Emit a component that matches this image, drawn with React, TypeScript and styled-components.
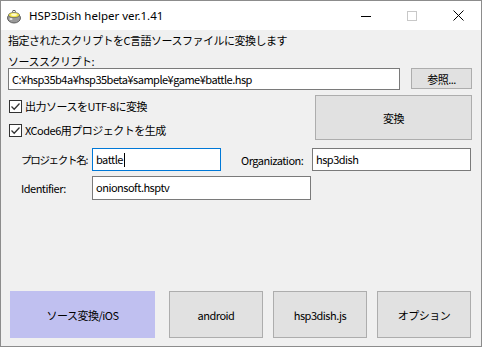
import { createGlobalStyle } from 'styled-components';
import styled from 'styled-components';

const GlobalStyle = createGlobalStyle`
	html, body {
		margin: 0;
		padding: 0;
		background: #ffffff;
	}
	* {
		box-sizing: border-box;
	}
`;

const UI_FONT = `"Noto Sans CJK JP", "Noto Sans", sans-serif`;

const Window = styled.div`
	width: 482px;
	height: 347px;
	border: 1px solid #8c8c8c;
	display: flex;
	flex-direction: column;
	background: #f0f0f0;
	font-family: ${UI_FONT};
	font-size: 11px;
	letter-spacing: -0.5px;
	color: #000;
`;

const TitleBar = styled.div`
	height: 29px;
	flex: none;
	background: #ffffff;
	display: flex;
	align-items: center;
	padding-left: 5px;
	letter-spacing: 0;
`;

const TitleText = styled.span`
	margin-left: 7px;
	font-family: "Noto Sans", sans-serif;
	font-size: 11.5px;
	color: #000;
	flex: 1;
`;

const Controls = styled.div`
	display: flex;
	height: 100%;
`;

const ControlBtn = styled.div`
	width: 46px;
	height: 100%;
	display: flex;
	align-items: center;
	justify-content: center;
`;

const Body = styled.div`
	flex: 1;
	display: flex;
	flex-direction: column;
	padding: 0 9px 8px 7px;
`;

const Caption = styled.div<{ $top: number }>`
	margin-top: ${(p) => p.$top}px;
	line-height: 14px;
	white-space: nowrap;
`;

const PathRow = styled.div`
	display: flex;
	align-items: flex-start;
	gap: 11px;
`;

const TextField = styled.div<{ $w: number; $h?: number; $focus?: boolean }>`
	width: ${(p) => p.$w}px;
	height: ${(p) => p.$h ?? 23}px;
	flex: none;
	background: #ffffff;
	border: 1px solid ${(p) => (p.$focus ? '#0078d7' : '#7a7a7a')};
	padding: 2px 0 0 3px;
	line-height: 16px;
	white-space: nowrap;
	overflow: hidden;
`;

const Caret = styled.span`
	display: inline-block;
	width: 1px;
	height: 14px;
	background: #000;
	vertical-align: -3px;
	margin-left: 1px;
`;

const Button = styled.div<{ $w: number; $h: number; $accent?: boolean }>`
	width: ${(p) => p.$w}px;
	height: ${(p) => p.$h}px;
	flex: none;
	background: ${(p) => (p.$accent ? '#c0c0f0' : '#e1e1e1')};
	border: 1px solid ${(p) => (p.$accent ? '#c0c0f0' : '#adadad')};
	display: flex;
	align-items: center;
	justify-content: center;
	white-space: nowrap;
`;

const Middle = styled.div`
	display: flex;
	justify-content: space-between;
	margin-top: 5px;
`;

const Checks = styled.div`
	display: flex;
	flex-direction: column;
	gap: 10px;
	padding-top: 4px;
`;

const CheckRow = styled.label`
	display: flex;
	align-items: center;
	height: 14px;
	gap: 3px;
	padding-left: 1px;
	white-space: nowrap;
`;

const Box = styled.span`
	width: 13px;
	height: 13px;
	border: 1px solid #333333;
	background: #ffffff;
	display: flex;
	align-items: center;
	justify-content: center;
`;

const Form = styled.div`
	display: flex;
	flex-direction: column;
	gap: 5px;
	margin-top: 8px;
	padding-left: 13px;
`;

const FormRow = styled.div`
	display: flex;
	align-items: center;
`;

const FieldLabel = styled.span<{ $w: number; $tight?: boolean }>`
	width: ${(p) => p.$w}px;
	flex: none;
	white-space: nowrap;
	font-size: ${(p) => (p.$tight ? '10.5px' : '11px')};
	letter-spacing: ${(p) => (p.$tight ? '-1.3px' : '-0.5px')};
`;

const BottomBar = styled.div`
	margin-top: auto;
	display: flex;
	align-items: flex-end;
	padding-left: 2px;
`;

const Spacer = styled.div<{ $w: number }>`
	width: ${(p) => p.$w}px;
	flex: none;
`;

const AppIcon = () => (
	<svg width="16" height="16" viewBox="0 0 16 16">
		<ellipse cx="8" cy="10" rx="6.5" ry="5" fill="#9a9a9a" stroke="#444" strokeWidth="0.8" />
		<ellipse cx="8" cy="7" rx="5.5" ry="2.6" fill="#f2e64a" stroke="#555" strokeWidth="0.6" />
		<ellipse cx="8" cy="6.8" rx="3" ry="1.2" fill="#fffbd0" />
		<path d="M6 3.5 Q8 1 10 3.5" fill="none" stroke="#555" strokeWidth="1" />
		<ellipse cx="5" cy="11" rx="1.6" ry="1" fill="#e6e6e6" />
	</svg>
);

const Check = () => (
	<svg width="11" height="11" viewBox="0 0 11 11">
		<path d="M1.5 5.5 L4.2 8.2 L9.5 2.5" fill="none" stroke="#333" strokeWidth="1.3" />
	</svg>
);

export default function App() {
	return (
		<>
			<GlobalStyle />
			<Window>
				<TitleBar>
					<AppIcon />
					<TitleText>HSP3Dish helper ver.1.41</TitleText>
					<Controls>
						<ControlBtn>
							<svg width="10" height="10" viewBox="0 0 10 10">
								<path d="M0 5.5 H10" stroke="#000" strokeWidth="1" />
							</svg>
						</ControlBtn>
						<ControlBtn>
							<svg width="10" height="10" viewBox="0 0 10 10">
								<rect x="0.5" y="0.5" width="9" height="9" fill="none" stroke="#c8c8c8" />
							</svg>
						</ControlBtn>
						<ControlBtn>
							<svg width="11" height="11" viewBox="0 0 11 11">
								<path d="M0.5 0.5 L10.5 10.5 M10.5 0.5 L0.5 10.5" stroke="#000" strokeWidth="1" />
							</svg>
						</ControlBtn>
					</Controls>
				</TitleBar>
				<Body>
					<Caption $top={3}>指定されたスクリプトをC言語ソースファイルに変換します</Caption>
					<Caption $top={7}>ソーススクリプト:</Caption>
					<PathRow>
						<TextField $w={392} $h={22}>C:¥hsp35b4a¥hsp35beta¥sample¥game¥battle.hsp</TextField>
						<Button $w={61} $h={21}>参照...</Button>
					</PathRow>
					<Middle>
						<Checks>
							<CheckRow>
								<Box><Check /></Box>
								出力ソースをUTF-8に変換
							</CheckRow>
							<CheckRow>
								<Box><Check /></Box>
								XCode6用プロジェクトを生成
							</CheckRow>
						</Checks>
						<Button $w={157} $h={45}>変換</Button>
					</Middle>
					<Form>
						<FormRow>
							<FieldLabel $w={71} $tight>プロジェクト名:</FieldLabel>
							<TextField $w={129} $focus>battle<Caret /></TextField>
							<Spacer $w={20} />
							<FieldLabel $w={71}>Organization:</FieldLabel>
							<TextField $w={159}>hsp3dish</TextField>
						</FormRow>
						<FormRow>
							<FieldLabel $w={71}>Identifier:</FieldLabel>
							<TextField $w={219} $h={24}>onionsoft.hsptv</TextField>
						</FormRow>
					</Form>
					<BottomBar>
						<Button $w={145} $h={47} $accent>ソース変換/iOS</Button>
						<Spacer $w={14} />
						<Button $w={94} $h={47}>android</Button>
						<Spacer $w={10} />
						<Button $w={94} $h={47}>hsp3dish.js</Button>
						<Spacer $w={10} />
						<Button $w={94} $h={47}>オプション</Button>
					</BottomBar>
				</Body>
			</Window>
		</>
	);
}
